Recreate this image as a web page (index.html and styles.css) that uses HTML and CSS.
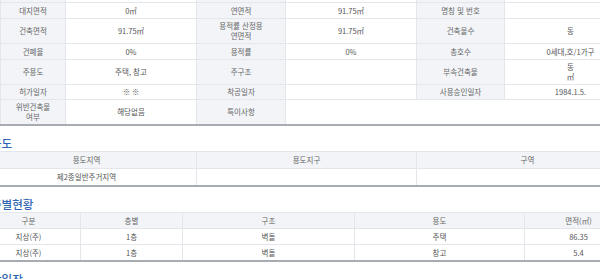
FILE: index.html
```html
<!DOCTYPE html>
<html lang="ko">
<head>
<meta charset="utf-8">
<link rel="stylesheet" href="styles.css">
</head>
<body>
<div class="page">
  <table class="grid info">
    <colgroup>
      <col style="width:65px"><col style="width:131px"><col style="width:89px"><col style="width:131px"><col style="width:88px"><col style="width:132px">
    </colgroup>
    <tr class="cut"><th></th><td></td><th></th><td></td><th></th><td></td></tr>
    <tr><th>대지면적</th><td>0㎡</td><th>연면적</th><td>91.75㎡</td><th>명칭 및 번호</th><td></td></tr>
    <tr class="two"><th>건축면적</th><td>91.75㎡</td><th>용적률 산정용<br>연면적</th><td>91.75㎡</td><th>건축물수</th><td>동</td></tr>
    <tr><th>건폐율</th><td>0%</td><th>용적률</th><td>0%</td><th>총호수</th><td>0세대,호/1가구</td></tr>
    <tr class="two"><th>주용도</th><td>주택, 창고</td><th>주구조</th><td></td><th>부속건축물</th><td>동<br>㎡</td></tr>
    <tr class="short"><th>허가일자</th><td>※ ※</td><th>착공일자</th><td></td><th>사용승인일자</th><td>1984.1.5.</td></tr>
    <tr class="two"><th>위반건축물<br>여부</th><td>해당없음</td><th>특이사항</th><td colspan="3"></td></tr>
  </table>

  <h2 class="title">용도</h2>
  <table class="grid zone">
    <colgroup><col style="width:220px"><col style="width:220px"><col style="width:222px"></colgroup>
    <tr><th>용도지역</th><th>용도지구</th><th>구역</th></tr>
    <tr><td>제2종일반주거지역</td><td></td><td></td></tr>
  </table>

  <h2 class="title">층별현황</h2>
  <table class="grid floors">
    <colgroup><col style="width:104px"><col style="width:102px"><col style="width:172px"><col style="width:170px"><col style="width:108px"></colgroup>
    <tr><th>구분</th><th>층별</th><th>구조</th><th>용도</th><th>면적(㎡)</th></tr>
    <tr><td>지상(주)</td><td>1층</td><td>벽돌</td><td>주택</td><td>86.35</td></tr>
    <tr><td>지상(주)</td><td>1층</td><td>벽돌</td><td>창고</td><td>5.4</td></tr>
  </table>

  <h2 class="title">단일장</h2>
</div>
</body>
</html>
```

FILE: styles.css
```css
html, body {
  margin: 0;
  padding: 0;
  background: #fff;
  overflow: hidden;
}

.page {
  width: 600px;
  height: 279px;
  overflow: hidden;
  font-family: "Noto Sans CJK KR", "Noto Sans", sans-serif;
  color: #555;
}

.grid {
  border-collapse: collapse;
  table-layout: fixed;
  font-size: 7.5px;
  line-height: 10px;
  text-align: center;
  border-bottom: 2px solid #a7abb2;
}

.grid th,
.grid td {
  border: 1px solid #e3e6ea;
  padding: 3px 2px 2px;
  font-weight: normal;
  white-space: nowrap;
  overflow: hidden;
}

.grid th {
  background: #f2f4f7;
  color: #666;
}

.grid td {
  background: #fff;
  color: #555;
}

.info {
  width: 636px;
  margin-top: -8px;
  margin-left: 0;
}

.info tr.cut th,
.info tr.cut td {
  height: 10px;
  padding: 0;
  border-top: none;
}

.info tr.two th,
.info tr.two td {
  padding: 2px 2px 2px;
}

.info tr.short th,
.info tr.short td {
  padding: 2px 2px 2px;
}

.zone {
  width: 662px;
  margin-left: -24px;
  border-top: 1px solid #a7abb2;
}

.zone th,
.zone td {
  padding: 3px 2px 3px;
}

.floors {
  width: 656px;
  margin-left: -24px;
  border-top: 1px solid #a7abb2;
}

.floors th,
.floors td {
  padding: 3px 2px 2px;
}

.title {
  margin: 9px 0 0 -9px;
  font-size: 11.5px;
  line-height: 16px;
  height: 16px;
  font-weight: 500;
  color: #2f66b3;
  white-space: nowrap;
}
```
